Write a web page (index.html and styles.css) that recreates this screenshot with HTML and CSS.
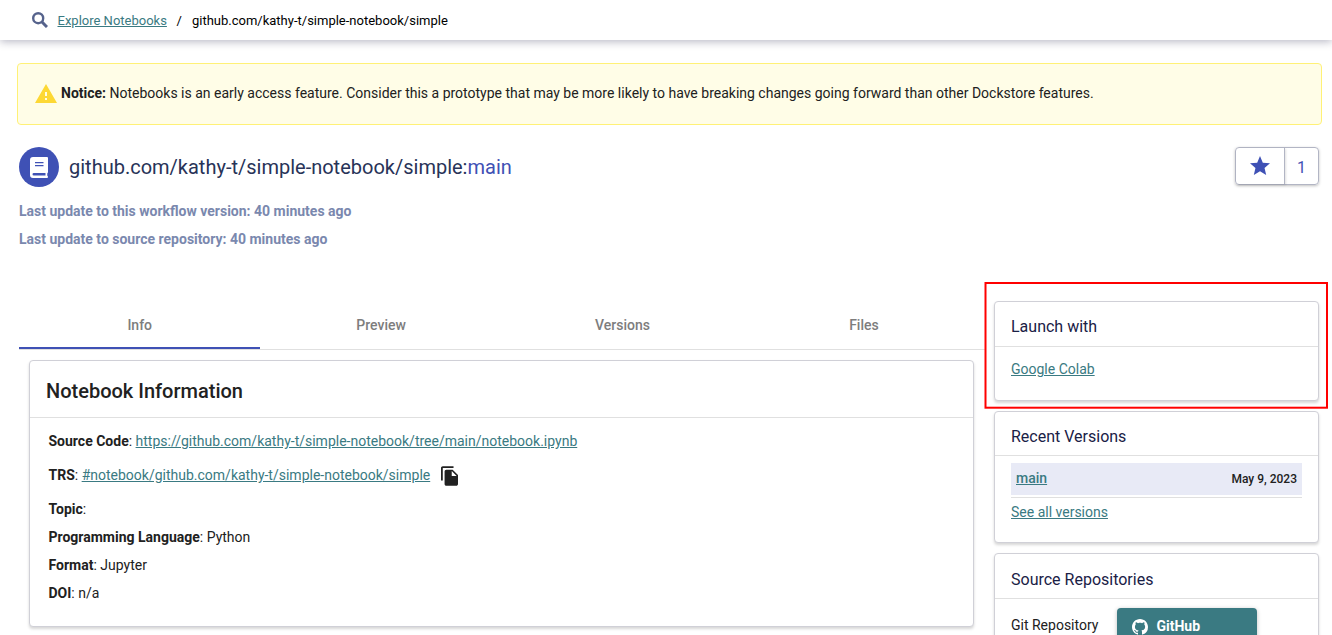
FILE: index.html
```html
<!DOCTYPE html>
<html lang="en">
<head>
<meta charset="utf-8">
<title>Dockstore Notebook</title>
<link rel="stylesheet" href="styles.css">
</head>
<body>
<header class="breadcrumb">
  <svg class="search-icon" viewBox="0 0 16 16"><circle cx="6.2" cy="6.2" r="5" fill="none" stroke="#56638c" stroke-width="2.4"/><path d="M10 10l5 5" stroke="#56638c" stroke-width="3"/></svg>
  <a href="#">Explore Notebooks</a><span class="slash">/</span><span>github.com/kathy-t/simple-notebook/simple</span>
</header>
<section class="notice">
  <svg class="warn-icon" viewBox="1 2 22 19"><path fill="#fdd835" d="M1 21h22L12 2 1 21zm12-3h-2v-2h2v2zm0-4h-2v-4h2v4z"/></svg>
  <p><b>Notice:</b> Notebooks is an early access feature. Consider this a prototype that may be more likely to have breaking changes going forward than other Dockstore features.</p>
</section>
<section class="title-row">
  <svg class="book-icon" viewBox="0 0 40 40"><circle cx="20" cy="20" r="20" fill="#3f51b5"/><path fill="#fff" fill-rule="evenodd" d="M14 10H28q1 0 1 1v14q0 .8-.6 1-.3 1.500 0 3 .6.200.6 1t-1 1H14Q11 31 11 28v-15Q11 10 14 10zM16 15v1.300h8.500V15zm0 3v1.300h8.500V18zm-1.200 8q-1.300 0-1.300 1.200t1.300 1.200H26.500V26z"/></svg>
  <h1>github.com/kathy-t/simple-notebook/simple:<span>main</span></h1>
  <div class="star-box">
    <div class="star"><svg viewBox="2 2 20 19"><path fill="#3f51b5" d="M12 17.270L18.180 21l-1.640-7.030L22 9.240l-7.190-.61L12 2 9.190 8.630 2 9.240l5.460 4.730L5.820 21z"/></svg></div>
    <div class="count">1</div>
  </div>
</section>
<div class="updates">
  <p>Last update to this workflow version: 40 minutes ago</p>
  <p>Last update to source repository: 40 minutes ago</p>
</div>
<div class="columns">
  <main class="content">
    <nav class="tabs"><div class="tab active">Info</div><div class="tab">Preview</div><div class="tab">Versions</div><div class="tab">Files</div></nav>
    <section class="card info">
      <h2>Notebook Information</h2>
      <div class="details">
        <p><b>Source Code</b>: <a href="#">https://github.com/kathy-t/simple-notebook/tree/main/notebook.ipynb</a></p>
        <p class="trs"><span><b>TRS</b>: <a href="#">#notebook/github.com/kathy-t/simple-notebook/simple</a></span><svg class="copy-icon" viewBox="2 1 19 22"><path fill="#212121" d="M16 1H4c-1.100 0-2 .9-2 2v14h2V3h12V1zm-1 4l6 6v10c0 1.100-.9 2-2 2H7.990C6.890 23 6 22.100 6 21l.01-14c0-1.100.89-2 1.990-2h7zm-1 7h5.500L14 6.500V12z"/></svg></p>
        <p><b>Topic</b>:</p>
        <p><b>Programming Language</b>: Python</p>
        <p><b>Format</b>: Jupyter</p>
        <p><b>DOI</b>: n/a</p>
      </div>
    </section>
  </main>
  <aside class="sidebar">
    <svg class="highlight" viewBox="0 0 344 127"><rect x="1.500" y="1" width="341.500" height="124.700" fill="none" stroke="#f00" stroke-width="2"/></svg>
    <section class="card launch"><h3>Launch with</h3><div class="body"><a href="#">Google Colab</a></div></section>
    <section class="card recent"><h3>Recent Versions</h3>
      <div class="body"><div class="version"><a href="#">main</a><span>May 9, 2023</span></div><div class="all"><a href="#">See all versions</a></div></div>
    </section>
    <section class="card repos"><h3>Source Repositories</h3>
      <div class="body repo"><span>Git Repository</span>
        <div class="github"><svg viewBox="0 0 16 16"><path fill="#fff" d="M8 0C3.580 0 0 3.580 0 8c0 3.540 2.290 6.530 5.470 7.590.4.070.55-.17.55-.38 0-.19-.01-.82-.01-1.490-2.010.37-2.530-.49-2.690-.94-.09-.23-.48-.94-.82-1.130-.28-.15-.68-.52-.01-.53.63-.01 1.080.58 1.230.82.72 1.210 1.870.87 2.330.66.070-.52.28-.87.51-1.070-1.780-.2-3.640-.89-3.640-3.950 0-.87.31-1.590.82-2.150-.08-.2-.36-1.020.08-2.120 0 0 .67-.21 2.200.82.640-.18 1.320-.27 2-.27s1.360.09 2 .27c1.530-1.040 2.200-.82 2.200-.82.440 1.100.16 1.920.08 2.120.51.560.82 1.270.82 2.150 0 3.070-1.870 3.750-3.650 3.950.29.250.54.730.54 1.480 0 1.070-.01 1.930-.01 2.200 0 .21.15.46.55.38A8.010 8.010 0 0 0 16 8c0-4.420-3.580-8-8-8z"/></svg>GitHub</div>
      </div>
    </section>
  </aside>
</div>
</body>
</html>
```
FILE: styles.css
```css
* { box-sizing: border-box; }
html { height: 635px; overflow: hidden; }
body { margin: 0; height: 635px; overflow: hidden; background: #fff; color: #212121; font: 14px/20px Roboto, sans-serif; }
p, h1, h2, h3 { margin: 0; }
a { color: #3a7a82; text-decoration: underline; }
.breadcrumb { height: 40px; display: flex; align-items: center; padding: 1px 0 0 32px; font-size: 13px; color: #000; box-shadow: 0 2px 8px rgba(30, 30, 70, .3); }
.search-icon { width: 16px; height: 16px; margin: -1px 9.500px 0 0; }
.slash { margin: 0 10px 0 9.700px; }
.notice { display: flex; align-items: center; height: 62px; margin: 23px 10px 0 17px; padding: 0 17px 2px; background: #fffde7; border: 1px solid #fff176; border-radius: 4px; }
.warn-icon { width: 22px; height: 19px; margin: 1px 4.500px 0 -.5px; }
.title-row { display: flex; align-items: center; height: 40px; margin: 22px 13px 0 19px; }
.book-icon { width: 40px; height: 40px; margin-right: 10px; }
h1 { flex: 1; font-size: 20px; line-height: 24px; font-weight: 400; color: #283358; }
h1 span { color: #3f51b5; }
.star-box { display: flex; width: 84px; height: 38px; border: 1px solid #b2b5c4; border-radius: 4px; box-shadow: 0 1px 3px rgba(0, 0, 0, .25); margin-top: -2px; }
.star, .count { display: flex; align-items: center; justify-content: center; }
.star { width: 49px; padding-bottom: 1px; border-right: 1px solid #b2b5c4; box-shadow: 1px 1px 2px rgba(0, 0, 0, .12); }
.star svg { width: 20px; height: 19px; }
.count { flex: 1; padding-top: 3px; color: #3f51b5; font-size: 16px; }
.updates { margin: 10px 0 0 19px; color: #7a88ae; font-weight: 700; line-height: 28px; }
.columns { display: flex; margin-left: 19px; padding-top: 48px; }
.content { width: 966px; }
.tabs { display: flex; height: 49px; padding-right: .4px; border-bottom: 1px solid #e0e0e0; }
.tab { flex: 1; height: 48px; line-height: 48px; text-align: center; font-weight: 500; color: #7d7d7d; }
.tab.active { border-bottom: 2px solid #3f51b5; }
.card { border: 1px solid #d0d0d7; border-radius: 4px; background: #fff; box-shadow: 0 2px 3px rgba(0, 0, 0, .16); }
.info { margin: 10px 11px 0 10px; height: 267px; }
h2 { height: 57px; padding: 18px 16px 0; font-size: 20px; line-height: 24px; font-weight: 500; border-bottom: 1px solid #e0e0e0; }
.details { padding: 9px 18.500px; line-height: 28px; }
.trs { display: flex; align-items: center; height: 40px; }
.copy-icon { width: 17px; height: 20px; margin: 2px 0 0 11px; }
.sidebar { position: relative; width: 325px; margin-left: 9px; }
.highlight { position: absolute; left: -10px; top: -19px; width: 344px; height: 127px; }
h3 { height: 45px; padding: 15px 16px 0; font-size: 16px; line-height: 20px; font-weight: 400; color: #1a2146; border-bottom: 1px solid #e0e0e0; }
.body { padding: 12px 16px; }
.launch { height: 100px; }
.recent { height: 132px; margin-top: 10px; }
.recent h3 { height: 44px; }
.recent .body { padding-top: 7px; }
.version { display: flex; justify-content: space-between; align-items: center; height: 32px; padding: 0 5px; background: #e8eaf6; font-weight: 500; }
.version a { margin-top: -2px; }
.version span { font-size: 12px; }
.all { margin-top: 2px; padding-top: 4px; border-top: 1px solid #e0e0e0; }
.repos { height: 100px; margin-top: 10px; }
.repos h3 { padding-top: 16px; }
.repo { display: flex; padding-top: 9px; align-items: center; }
.repo > span { margin-top: -2px; }
.github { display: flex; align-items: center; width: 140px; height: 36px; margin-left: 19px; padding-left: 15px; border-radius: 4px; background: #3a7a82; color: #fff; font-weight: 700; box-shadow: 0 1px 4px rgba(0, 0, 0, .25); }
.github svg { width: 16px; height: 16px; margin: 2px 8px 0 0; }
```
